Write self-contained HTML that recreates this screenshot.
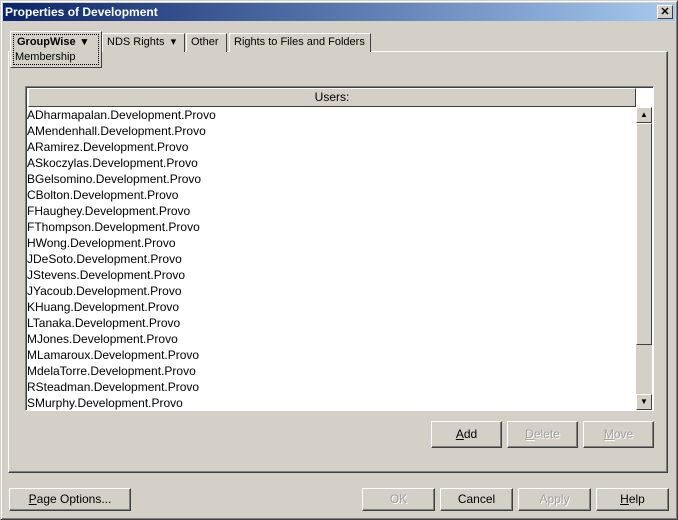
<!DOCTYPE html>
<html><head><style>
*{box-sizing:border-box}
body{margin:0;width:678px;height:520px;background:#d4d0c8;font-family:"Liberation Sans",sans-serif;font-size:11px;position:relative;overflow:hidden}
.abs{position:absolute}
.win{left:0;top:0;width:678px;height:520px;border:1px solid;border-color:#d4d0c8 #404040 #404040 #d4d0c8;box-shadow:inset 1px 1px #fff,inset -1px -1px #808080}
.title{left:3px;top:3px;width:672px;height:18px;background:linear-gradient(90deg,#0a246a,#a6caf0);color:#fff;font-weight:bold;font-size:12px;line-height:18px;padding-left:2px}
.xb{right:5px;top:5px;width:16px;height:14px;background:#d4d0c8;border:1px solid;border-color:#fff #404040 #404040 #fff;color:#000;font-size:11px;line-height:12px;text-align:center;font-weight:bold}
.btn{height:23px;background:#d4d0c8;border:1px solid;border-color:#fff #404040 #404040 #fff;box-shadow:inset -1px -1px #808080;text-align:center;line-height:21px;font-size:12px;color:#000}
.dis{color:#a0a0a0;text-shadow:1px 1px #fff}
.tab{top:33px;height:19px;border:1px solid;border-color:#fff #404040 transparent #fff;border-bottom:none;font-size:11px;line-height:17px;padding:0 4px;background:#d4d0c8}
.panel{left:8px;top:51px;width:660px;height:422px;border:1px solid;border-color:#fff #404040 #404040 #fff;box-shadow:inset -1px -1px #808080}
.list{left:25px;top:86px;width:629px;height:325px;border:1px solid;border-color:#808080 #fff #fff #808080;background:#fff;box-shadow:inset 1px 1px #404040}
.hdr{left:2px;top:1px;width:608px;height:19px;background:#d4d0c8;border:1px solid;border-color:#fff #404040 #404040 #fff;text-align:center;line-height:17px;font-size:12px}
.rows{left:1px;top:20px;font-size:12px;line-height:16px}
.sb{left:610px;top:20px;width:16px;height:303px;background:#d4d0c8;border:none}
.sbb{width:16px;height:16px;background:#d4d0c8;border:1px solid;border-color:#fff #404040 #404040 #fff;left:0;font-size:8px;text-align:center;line-height:14px}
u{text-decoration:underline}
</style></head><body>
<div class="abs win"></div>
<div class="abs title">Properties of Development</div>
<div class="abs xb">✕</div>
<div class="abs panel"></div>
<div class="abs" style="left:10px;top:31px;width:92px;height:37px;border:1px solid;border-color:#fff #404040 #404040 #fff;background:#d4d0c8"><div style="position:absolute;left:2px;top:2px;width:86px;height:31px;border:1px dotted #000"></div><div style="position:absolute;left:6px;top:3px;font-weight:bold;font-size:11px">GroupWise&nbsp; ▾</div><div style="position:absolute;left:4px;top:19px;font-size:11px">Membership</div></div>
<div class="abs tab" style="left:102px;width:83px">NDS Rights &nbsp;▾</div>
<div class="abs tab" style="left:186px;width:41px">Other</div>
<div class="abs tab" style="left:229px;width:142px">Rights to Files and Folders</div>
<div class="abs list">
<div class="abs hdr">Users:</div>
<div class="abs rows">ADharmapalan.Development.Provo<br>AMendenhall.Development.Provo<br>ARamirez.Development.Provo<br>ASkoczylas.Development.Provo<br>BGelsomino.Development.Provo<br>CBolton.Development.Provo<br>FHaughey.Development.Provo<br>FThompson.Development.Provo<br>HWong.Development.Provo<br>JDeSoto.Development.Provo<br>JStevens.Development.Provo<br>JYacoub.Development.Provo<br>KHuang.Development.Provo<br>LTanaka.Development.Provo<br>MJones.Development.Provo<br>MLamaroux.Development.Provo<br>MdelaTorre.Development.Provo<br>RSteadman.Development.Provo<br>SMurphy.Development.Provo</div>
<div class="abs sb">
<div class="abs sbb" style="top:0">▲</div>
<div class="abs sbb" style="top:16px;height:222px"></div>
<div class="abs sbb" style="top:287px">▼</div>
</div>
</div>
<div class="abs btn" style="left:431px;top:421px;width:71px;height:27px;line-height:25px"><u>A</u>dd</div>
<div class="abs btn dis" style="left:507px;top:421px;width:71px;height:27px;line-height:25px"><u>D</u>elete</div>
<div class="abs btn dis" style="left:583px;top:421px;width:71px;height:27px;line-height:25px"><u>M</u>ove</div>
<div class="abs btn" style="left:9px;top:488px;width:122px"><u>P</u>age Options...</div>
<div class="abs btn dis" style="left:362px;top:488px;width:73px">OK</div>
<div class="abs btn" style="left:440px;top:488px;width:73px">Cancel</div>
<div class="abs btn dis" style="left:518px;top:488px;width:73px">Apply</div>
<div class="abs btn" style="left:596px;top:488px;width:73px"><u>H</u>elp</div>
</body></html>
